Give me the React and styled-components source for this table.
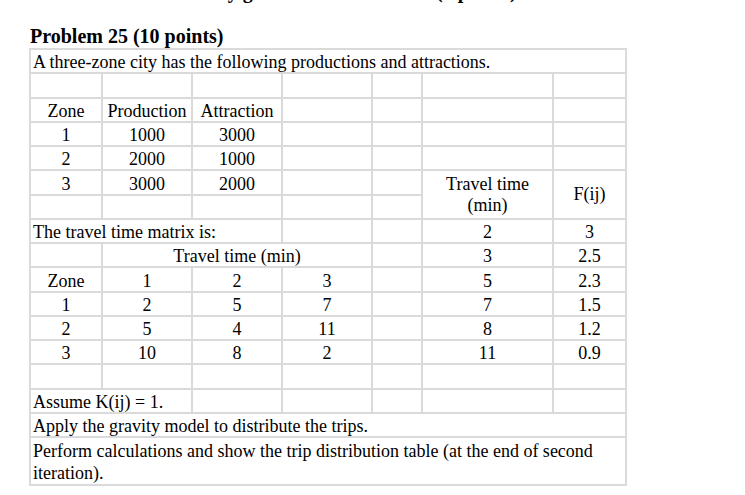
import React from "react";
import styled, { createGlobalStyle } from "styled-components";

const Global = createGlobalStyle`
  html, body { margin: 0; padding: 0; background: #ffffff; }
  body { font-family: "Liberation Serif", "Times New Roman", serif; color: #000; }
`;

const Page = styled.div`
  padding-left: 30px;
  width: 715px;
`;

const Clip = styled.div`
  height: 4px;
  overflow: hidden;
`;

const Heading = styled.div`
  font-family: "Liberation Serif", "Times New Roman", serif;
  font-weight: bold;
  font-size: 20px;
  line-height: 20px;
  white-space: nowrap;
  margin-top: ${(p) => (p.$cut ? "-19px" : "22px")};
  margin-bottom: ${(p) => (p.$cut ? "0" : "2px")};
`;

const Table = styled.table`
  margin-left: -1px;
  border-collapse: separate;
  border-spacing: 0;
  border: 1px solid #dadada;
  table-layout: fixed;
  width: 598px;
  font-family: "Liberation Serif", "Times New Roman", serif;
  font-size: 18px;
  line-height: 19px;
  color: #000;
`;

const Row = styled.tr`
  height: ${(p) => p.$h || 24.25}px;
`;

const Cell = styled.td`
  font-family: "Liberation Serif", "Times New Roman", serif;
  border: 1px solid #dadada;
  padding: 0 2px;
  line-height: ${(p) => p.$lh || 19}px;
  text-align: ${(p) => (p.$left ? "left" : "center")};
  vertical-align: ${(p) => p.$va || "bottom"};
  white-space: ${(p) => (p.$wrap ? "normal" : "nowrap")};
  overflow: hidden;
`;

const widths = [72, 90, 90, 90, 50, 131, 73];

const Empty = ({ n }) =>
  Array.from({ length: n }).map((_, i) => <Cell key={i} />);

export default function App() {
  return (
    <>
      <Global />
      <Page>
        <Clip>
          <Heading $cut>Calculate the tail end by generation at the ends (5 points)</Heading>
        </Clip>
        <Heading>Problem 25 (10 points)</Heading>
        <Table>
          <colgroup>
            {widths.map((w, i) => (
              <col key={i} style={{ width: w }} />
            ))}
          </colgroup>
          <tbody>
            <Row>
              <Cell colSpan={7} $left>
                A three-zone city has the following productions and attractions.
              </Cell>
            </Row>
            <Row>
              <Empty n={7} />
            </Row>
            <Row>
              <Cell>Zone</Cell>
              <Cell>Production</Cell>
              <Cell>Attraction</Cell>
              <Empty n={4} />
            </Row>
            <Row>
              <Cell>1</Cell>
              <Cell>1000</Cell>
              <Cell>3000</Cell>
              <Empty n={4} />
            </Row>
            <Row>
              <Cell>2</Cell>
              <Cell>2000</Cell>
              <Cell>1000</Cell>
              <Empty n={4} />
            </Row>
            <Row>
              <Cell>3</Cell>
              <Cell>3000</Cell>
              <Cell>2000</Cell>
              <Empty n={2} />
              <Cell rowSpan={2} $va="middle" $lh={21}>
                Travel time
                <br />
                (min)
              </Cell>
              <Cell rowSpan={2} $va="middle">
                F(ij)
              </Cell>
            </Row>
            <Row>
              <Empty n={5} />
            </Row>
            <Row>
              <Cell colSpan={3} $left>
                The travel time matrix is:
              </Cell>
              <Empty n={2} />
              <Cell>2</Cell>
              <Cell>3</Cell>
            </Row>
            <Row>
              <Cell />
              <Cell colSpan={3}>Travel time (min)</Cell>
              <Cell />
              <Cell>3</Cell>
              <Cell>2.5</Cell>
            </Row>
            <Row>
              <Cell>Zone</Cell>
              <Cell>1</Cell>
              <Cell>2</Cell>
              <Cell>3</Cell>
              <Cell />
              <Cell>5</Cell>
              <Cell>2.3</Cell>
            </Row>
            <Row>
              <Cell>1</Cell>
              <Cell>2</Cell>
              <Cell>5</Cell>
              <Cell>7</Cell>
              <Cell />
              <Cell>7</Cell>
              <Cell>1.5</Cell>
            </Row>
            <Row>
              <Cell>2</Cell>
              <Cell>5</Cell>
              <Cell>4</Cell>
              <Cell>11</Cell>
              <Cell />
              <Cell>8</Cell>
              <Cell>1.2</Cell>
            </Row>
            <Row>
              <Cell>3</Cell>
              <Cell>10</Cell>
              <Cell>8</Cell>
              <Cell>2</Cell>
              <Cell />
              <Cell>11</Cell>
              <Cell>0.9</Cell>
            </Row>
            <Row>
              <Empty n={7} />
            </Row>
            <Row>
              <Cell colSpan={2} $left>
                Assume K(ij) = 1.
              </Cell>
              <Empty n={5} />
            </Row>
            <Row>
              <Cell colSpan={7} $left>
                Apply the gravity model to distribute the trips.
              </Cell>
            </Row>
            <Row $h={48}>
              <Cell colSpan={7} $left $wrap $lh={22}>
                Perform calculations and show the trip distribution table (at the end of second
                <br />
                iteration).
              </Cell>
            </Row>
          </tbody>
        </Table>
      </Page>
    </>
  );
}
